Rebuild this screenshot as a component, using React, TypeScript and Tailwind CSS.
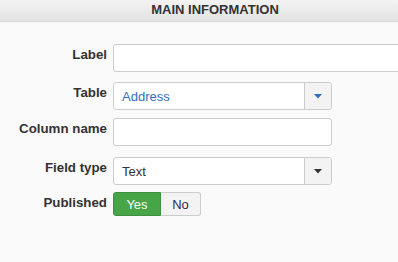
import { ReactNode } from "react";

const font = { fontFamily: '"Liberation Sans", Arial, sans-serif' };

function Row({ label, className, children }: { label: string; className: string; children: ReactNode }) {
  return (
    <div className={`flex items-start ${className}`}>
      <div className="w-[107px] shrink-0 pt-[2px] text-right text-[13.3px] leading-[18px] font-bold text-[#333]">{label}</div>
      <div className="ml-[6px]">{children}</div>
    </div>
  );
}

function Caret({ color }: { color: string }) {
  return (
    <svg width="8" height="5" viewBox="0 0 8 5">
      <path d="M0 0 H8 L4 4.5 Z" fill={color} />
    </svg>
  );
}

function Select({ value, blue }: { value: string; blue?: boolean }) {
  return (
    <div className="flex h-[28px] w-[219px] rounded-[3px] border border-[#ccc] bg-white">
      <div className={`flex-1 pl-[8px] pt-[5px] text-[13px] leading-[18px] ${blue ? "text-[#2f6fbd]" : "text-[#333]"}`}>
        {value}
      </div>
      <div className="flex w-[27px] items-center justify-center rounded-r-[3px] border-l border-[#ccc] bg-[#f3f3f3]">
        <Caret color={blue ? "#2f6fbd" : "#333"} />
      </div>
    </div>
  );
}

export default function App() {
  return (
    <div className="h-[262px] w-[398px] overflow-hidden bg-[#fafafa]" style={font}>
      <div className="flex h-[22px] items-start justify-center border-b border-[#d9d9d9] bg-gradient-to-b from-[#f3f3f3] to-[#e3e3e3] pl-[32px] pt-[2px] text-[13px] leading-[16px] font-bold text-[#333]">
        MAIN INFORMATION
      </div>
      <Row label="Label" className="mt-[22px]">
        <div className="h-[28px] w-[320px] rounded-[3px] border border-[#ccc] bg-white" />
      </Row>
      <Row label="Table" className="mt-[10px]">
        <Select value="Address" blue />
      </Row>
      <Row label="Column name" className="mt-[8px]">
        <div className="h-[28px] w-[219px] rounded-[3px] border border-[#ccc] bg-white" />
      </Row>
      <Row label="Field type" className="mt-[11px]">
        <Select value="Text" />
      </Row>
      <Row label="Published" className="mt-[7px]">
        <div className="flex h-[24px] text-[13px] leading-[23px]">
          <div className="w-[48px] rounded-l-[3px] border border-[#3e8f3e] bg-[#47a447] text-center text-white">Yes</div>
          <div className="w-[40px] rounded-r-[3px] border border-l-0 border-[#ccc] bg-[#f3f3f3] text-center text-[#2b2b45]">No</div>
        </div>
      </Row>
    </div>
  );
}
